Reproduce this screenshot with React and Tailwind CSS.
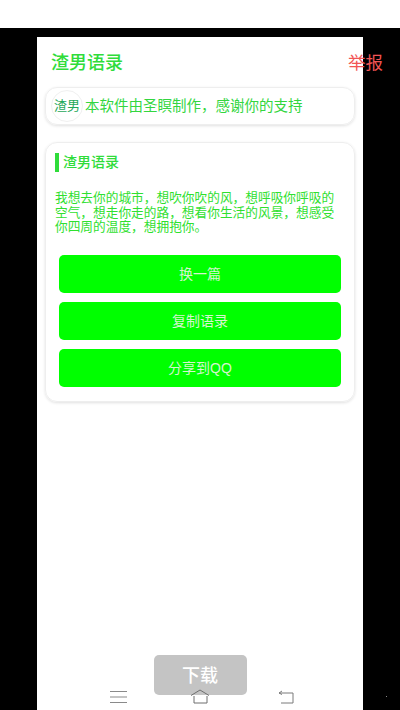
const FONT = "font-['Liberation_Sans','Noto_Sans_CJK_SC',sans-serif]";

const QUOTE = "我想去你的城市，想吹你吹的风，想呼吸你呼吸的空气，想走你走的路，想看你生活的风景，想感受你四周的温度，想拥抱你。";

function ActionButton({ children }) {
    return (
        <button className="h-[38px] w-full rounded-[5px] bg-[#00ff00] pt-[2px] text-[14px] text-[#d6f5d0]">
            {children}
        </button>
    );
}

function NavIcons() {
    return (
        <div className="relative flex h-[20px] items-start justify-between pl-[73px] pr-[69px]">
            <svg width="17" height="14" viewBox="0 0 17 14" fill="none" stroke="#8a8a8a" strokeWidth="1">
                <path d="M0 1.5h17M0 7h17M0 12.5h17" />
            </svg>
            <svg width="20" height="15" viewBox="0 0 20 15" fill="none" stroke="#6f6f6f" strokeWidth="1" className="-ml-[5px] -mt-[1px]">
                <path d="M1 6.5 10 1l9 5.5M4 7v7h13V7" />
            </svg>
            <svg width="16" height="14" viewBox="0 0 16 14" fill="none" stroke="#7a7a7a" strokeWidth="1">
                <path d="M4 1 1 3l3 1.5M1 3h14v10H3" />
            </svg>
        </div>
    );
}

export default function App() {
    return (
        <div className={`${FONT} relative h-[710px] w-[400px] overflow-hidden bg-white pt-[28px]`}>
            <div className="h-[682px] bg-black pl-[37px] pt-[9px]">
                <div className="flex h-[673px] w-[326px] flex-col bg-white px-[8px]">
                    <div className="flex items-center justify-between pl-[6px] pt-[13px]">
                        <span className="text-[18px] leading-[26px] font-medium text-[#2fdc3a]">渣男语录</span>
                        <span className="-mr-[28px] text-[17.5px] leading-[26px] text-[#f25555]">举报</span>
                    </div>

                    <div className="mt-[11px] flex h-[38px] items-center rounded-[12px] border border-[#eeeeee] shadow-[0_1px_3px_rgba(0,0,0,0.12)]">
                        <div className="ml-[5px] mr-[2px] flex h-[32px] w-[32px] shrink-0 items-center justify-center rounded-full border border-[#f0f0f0] text-[13px] whitespace-nowrap text-[#1fa85a]">
                            渣男
                        </div>
                        <span className="mt-[2px] text-[14.5px] text-[#33d63f]">本软件由圣瞑制作，感谢你的支持</span>
                    </div>

                    <div className="mt-[17px] flex h-[260px] flex-col rounded-[12px] border border-[#eeeeee] pt-[10px] shadow-[0_1px_3px_rgba(0,0,0,0.12)]">
                        <div className="flex items-center gap-[4px] pl-[9px]">
                            <div className="h-[19px] w-[4px] bg-[#2fdc3a]"></div>
                            <span className="text-[14px] leading-[19px] font-medium text-[#2fdc3a]">渣男语录</span>
                        </div>
                        <p className="mt-[19px] pl-[9px] pr-[8px] text-[12.7px] leading-[14.5px] text-[#2fe02f]">{QUOTE}</p>
                        <div className="mt-[20px] flex flex-col gap-[9px] px-[13px]">
                            <ActionButton>换一篇</ActionButton>
                            <ActionButton>复制语录</ActionButton>
                            <ActionButton>分享到QQ</ActionButton>
                        </div>
                    </div>

                    <div className="mt-auto -mx-[8px]">
                        <button className="mx-auto -mb-[5px] block h-[40px] w-[93px] rounded-[5px] bg-[#c4c4c4] pt-[3px] text-[18px] font-medium text-white">
                            下载
                        </button>
                        <NavIcons />
                    </div>
                </div>
            </div>
            <div className="absolute left-[386px] top-[696px] h-[1px] w-[1px] bg-[#888888]"></div>
        </div>
    );
}
